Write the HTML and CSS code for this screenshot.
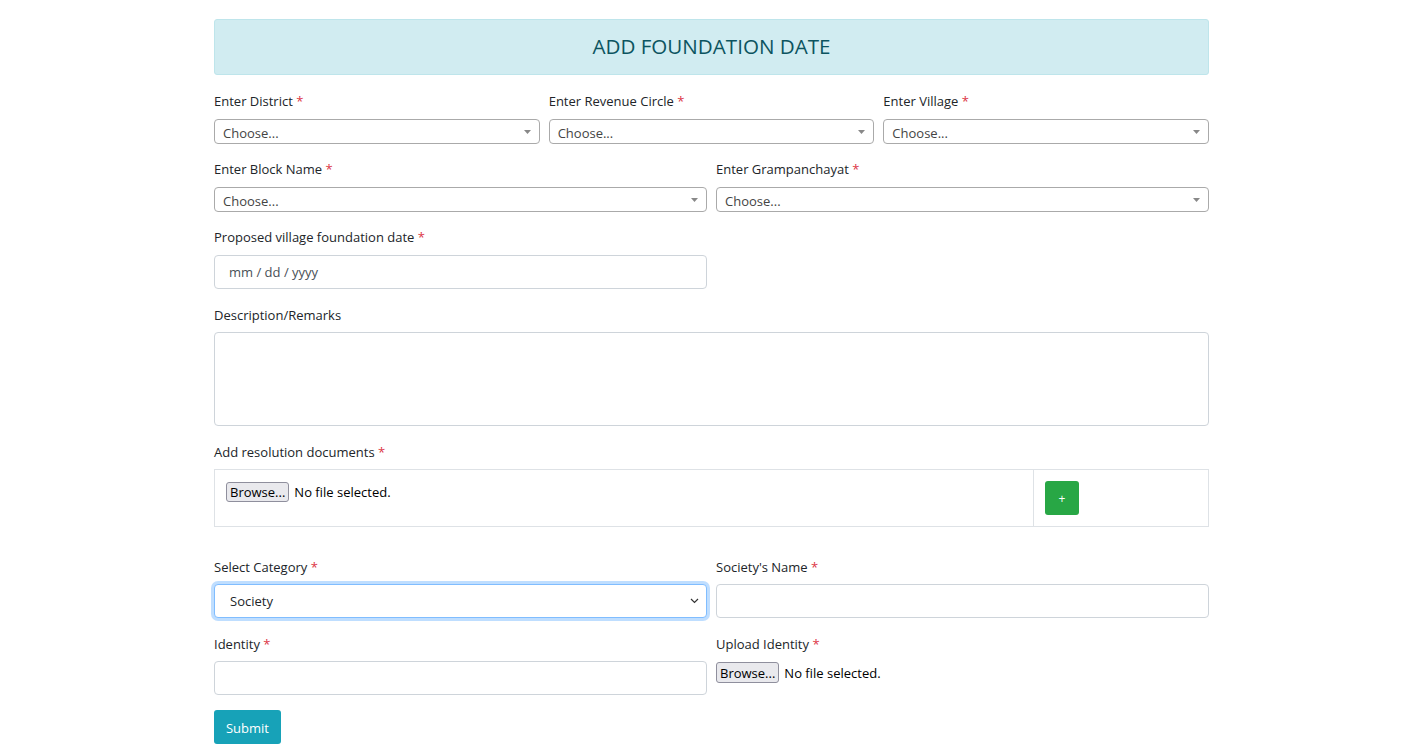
FILE: index.html
```html
<!DOCTYPE html>
<html lang="en">
<head>
<meta charset="utf-8">
<title>Add Foundation Date</title>
<link rel="stylesheet" href="styles.css">
</head>
<body>
<main class="container">
  <div class="banner">ADD FOUNDATION DATE</div>

  <div class="row three">
    <div class="group">
      <label class="lbl">Enter District <span class="req">*</span></label>
      <div class="s2"><span>Choose...</span><svg class="tri" width="7" height="4" viewBox="0 0 7 4"><path d="M0 0h7L3.5 4z" fill="#888"/></svg></div>
    </div>
    <div class="group">
      <label class="lbl">Enter Revenue Circle <span class="req">*</span></label>
      <div class="s2"><span>Choose...</span><svg class="tri" width="7" height="4" viewBox="0 0 7 4"><path d="M0 0h7L3.5 4z" fill="#888"/></svg></div>
    </div>
    <div class="group">
      <label class="lbl">Enter Village <span class="req">*</span></label>
      <div class="s2"><span>Choose...</span><svg class="tri" width="7" height="4" viewBox="0 0 7 4"><path d="M0 0h7L3.5 4z" fill="#888"/></svg></div>
    </div>
  </div>

  <div class="row two">
    <div class="group">
      <label class="lbl">Enter Block Name <span class="req">*</span></label>
      <div class="s2"><span>Choose...</span><svg class="tri" width="7" height="4" viewBox="0 0 7 4"><path d="M0 0h7L3.5 4z" fill="#888"/></svg></div>
    </div>
    <div class="group">
      <label class="lbl">Enter Grampanchayat <span class="req">*</span></label>
      <div class="s2"><span>Choose...</span><svg class="tri" width="7" height="4" viewBox="0 0 7 4"><path d="M0 0h7L3.5 4z" fill="#888"/></svg></div>
    </div>
  </div>

  <div class="row two">
    <div class="group">
      <label class="lbl">Proposed village foundation date <span class="req">*</span></label>
      <div class="ctrl date">mm / dd / yyyy</div>
    </div>
  </div>

  <div class="group">
    <label class="lbl low">Description/Remarks</label>
    <div class="ctrl area"></div>
  </div>

  <div class="group table-group">
    <label class="lbl low">Add resolution documents <span class="req">*</span></label>
    <div class="doc-table">
      <div class="cell cell-file">
        <span class="browse">Browse...</span><span class="nofile">No file selected.</span>
      </div>
      <div class="cell cell-add">
        <span class="btn-add">+</span>
      </div>
    </div>
  </div>

  <div class="row two">
    <div class="group">
      <label class="lbl low">Select Category <span class="req">*</span></label>
      <div class="ctrl sel focus"><span>Society</span><svg width="9" height="6" viewBox="0 0 9 6"><path d="M1 1l3.5 3.5L8 1" fill="none" stroke="#333" stroke-width="1.2"/></svg></div>
    </div>
    <div class="group">
      <label class="lbl low">Society's Name <span class="req">*</span></label>
      <div class="ctrl"></div>
    </div>
  </div>

  <div class="row two">
    <div class="group">
      <label class="lbl low">Identity <span class="req">*</span></label>
      <div class="ctrl"></div>
    </div>
    <div class="group">
      <label class="lbl low">Upload Identity <span class="req">*</span></label>
      <div class="upload"><span class="browse">Browse...</span><span class="nofile">No file selected.</span></div>
    </div>
  </div>

  <div class="actions"><span class="btn-submit">Submit</span></div>
</main>
</body>
</html>
```
FILE: styles.css
```css
html, body {
  margin: 0;
  padding: 0;
  overflow: hidden;
  background: #fff;
}
body {
  font-family: "Open Sans", "Noto Sans", sans-serif;
  font-size: 13px;
  color: #212529;
  padding-right: 1px;
}
.container {
  width: 995px;
  margin: 0 auto;
  padding-top: 19px;
}
.banner {
  border: 1px solid #bee5eb;
  background: #d1ecf1;
  color: #0c5460;
  border-radius: 3px;
  display: flex;
  align-items: center;
  justify-content: center;
  font-size: 20.6px;
  padding-bottom: 2px;
  height: 52px;
  margin-bottom: 16px;
}
.row {
  display: grid;
  column-gap: 9px;
}
.row.three { grid-template-columns: 1fr 1fr 1fr; }
.row.two { grid-template-columns: 1fr 1fr; }
.group {
  margin-bottom: 15px;
}
.lbl {
  display: block;
  line-height: 20px;
  margin-bottom: 8px;
}
.lbl.low {
  padding-top: 1px;
  margin-bottom: 7px;
}
.req { color: #dc3545; }
.s2 {
  box-sizing: border-box;
  height: 25px;
  border: 1px solid #aaa;
  border-radius: 4px;
  display: flex;
  align-items: center;
  justify-content: space-between;
  padding: 2px 8px 0 8px;
  color: #444;
}
.s2 .tri { margin-top: -2px; }
.ctrl {
  box-sizing: border-box;
  height: 34px;
  border: 1px solid #ced4da;
  border-radius: 4px;
  background: #fff;
}
.date {
  display: flex;
  align-items: center;
  padding-left: 14px;
  color: #495057;
}
.area { height: 94px; }
.table-group { margin-bottom: 29px; }
.doc-table {
  display: flex;
  border: 1px solid #dee2e6;
  height: 58px;
  box-sizing: border-box;
}
.cell {
  padding: 12px 11px;
  box-sizing: border-box;
}
.cell-file {
  width: 819px;
  border-right: 1px solid #dee2e6;
  display: flex;
  align-items: flex-start;
  padding-top: 12px;
}
.cell-add { flex: 1; padding-top: 11px; }
.browse {
  display: inline-flex;
  align-items: center;
  box-sizing: border-box;
  height: 20px;
  padding: 0 3px;
  background: #e9e9ed;
  border: 1px solid #8f8f9d;
  border-radius: 3px;
  font-family: "Open Sans", sans-serif;
  font-size: 13px;
  color: #000;
}
.nofile {
  margin-left: 5px;
  line-height: 20px;
  color: #000;
}
.btn-add {
  display: flex;
  align-items: center;
  justify-content: center;
  width: 34px;
  height: 34px;
  background: #28a745;
  border-radius: 3px;
  color: #fff;
  font-size: 12px;
}
.sel {
  display: flex;
  align-items: center;
  justify-content: space-between;
  padding: 0 7px 0 15px;
  color: #212529;
}
.focus {
  border-color: #80bdff;
  box-shadow: 0 0 0 3px rgba(0, 123, 255, 0.25);
}
.upload {
  display: flex;
  align-items: center;
  padding-top: 1px;
}
.upload .browse { height: 21px; }
.btn-submit {
  display: inline-flex;
  align-items: center;
  justify-content: center;
  box-sizing: border-box;
  width: 67px;
  height: 34px;
  padding-top: 2px;
  background: #17a2b8;
  color: #fff;
  border-radius: 3px;
}
```
